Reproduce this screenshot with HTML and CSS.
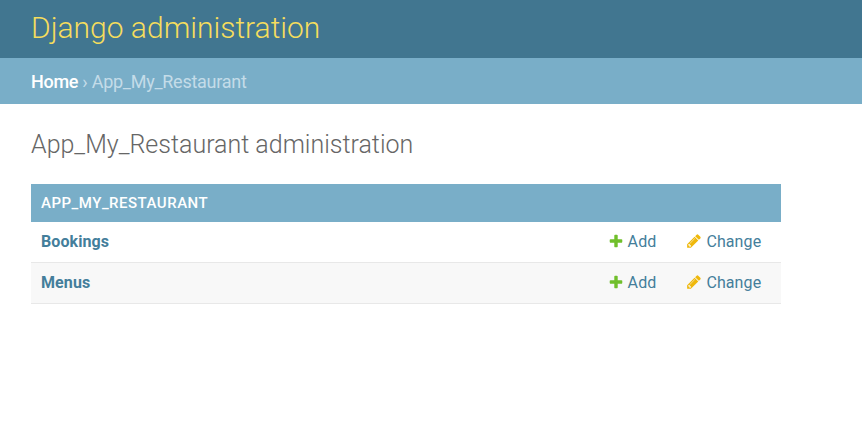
FILE: index.html
```html
<!DOCTYPE html>
<html lang="en">
<head>
<meta charset="utf-8">
<title>App_My_Restaurant administration</title>
<link rel="stylesheet" href="styles.css">
</head>
<body>
<header class="header"><h1 class="brand">Django administration</h1></header>
<nav class="breadcrumbs"><a class="home" href="#">Home</a> › App_My_Restaurant</nav>
<main class="content">
<h2 class="title">App_My_Restaurant administration</h2>
<section class="module">
<h3 class="caption">App_My_Restaurant</h3>
<div class="row">
<a class="model" href="#">Bookings</a>
<a class="add" href="#"><svg class="icon" viewBox="0 0 1792 1792"><path fill="#70bf2b" d="M1600 796v192q0 40-28 68t-68 28h-416v416q0 40-28 68t-68 28h-192q-40 0-68-28t-28-68v-416h-416q-40 0-68-28t-28-68v-192q0-40 28-68t68-28h416v-416q0-40 28-68t68-28h192q40 0 68 28t28 68v416h416q40 0 68 28t28 68z"/></svg>Add</a>
<a class="change" href="#"><svg class="icon" viewBox="0 0 1792 1792"><path fill="#efb80b" d="M491 1536l91-91-235-235-91 91v107h128v128h107zm523-928q0-22-22-22-10 0-17 7l-542 542q-7 7-7 17 0 22 22 22 10 0 17-7l542-542q7-7 7-17zm-54-192l416 416-832 832h-416v-416zm683 96q0 53-37 90l-166 166-416-416 166-165q36-38 90-38 53 0 91 38l235 234q37 39 37 91z"/></svg>Change</a>
</div>
<div class="row alt">
<a class="model" href="#">Menus</a>
<a class="add" href="#"><svg class="icon" viewBox="0 0 1792 1792"><path fill="#70bf2b" d="M1600 796v192q0 40-28 68t-68 28h-416v416q0 40-28 68t-68 28h-192q-40 0-68-28t-28-68v-416h-416q-40 0-68-28t-28-68v-192q0-40 28-68t68-28h416v-416q0-40 28-68t68-28h192q40 0 68 28t28 68v416h416q40 0 68 28t28 68z"/></svg>Add</a>
<a class="change" href="#"><svg class="icon" viewBox="0 0 1792 1792"><path fill="#efb80b" d="M491 1536l91-91-235-235-91 91v107h128v128h107zm523-928q0-22-22-22-10 0-17 7l-542 542q-7 7-7 17 0 22 22 22 10 0 17-7l542-542q7-7 7-17zm-54-192l416 416-832 832h-416v-416zm683 96q0 53-37 90l-166 166-416-416 166-165q36-38 90-38 53 0 91 38l235 234q37 39 37 91z"/></svg>Change</a>
</div>
</section>
</main>
</body>
</html>
```
FILE: styles.css
```css
* { box-sizing: border-box; }
body { margin: 0; background: #fff; font-family: Roboto, sans-serif; color: #333; }
a { color: #447e9b; text-decoration: none; }
.header { height: 58px; padding: 0 31px; background: #417690; }
.brand { margin: 0; font-size: 30px; line-height: 56px; font-weight: 300; color: #f5dd5d; }
.breadcrumbs { height: 46px; padding: 0 31px; background: #79aec8; color: #c4dce8; font-size: 18px; line-height: 48px; letter-spacing: -0.26px; }
.breadcrumbs .home { color: #fff; font-weight: 500; letter-spacing: -0.3px; }
.content { padding: 25px 31px; }
.title { margin: 0 0 23px; font-size: 25px; line-height: 32px; font-weight: 300; color: #666; }
.module { width: 750px; }
.caption { margin: 0; height: 38px; padding: 0 10px; background: #79aec8; color: #fff; font-size: 15px; line-height: 38px; font-weight: 500; letter-spacing: 0.5px; text-transform: uppercase; }
.row { display: grid; grid-template-columns: 1fr 78px 85px; height: 41px; padding: 0 10px; border-bottom: 1px solid #e8e8e8; font-size: 16px; line-height: 40px; letter-spacing: 0.1px; }
.alt { background: #f8f8f8; }
.model { font-weight: 700; }
.add, .change { display: flex; align-items: center; }
.icon { width: 16px; height: 16px; margin: 0 4px 2px 0; }
.add .icon { margin-right: 3.6px; }
.change .icon { margin-right: 4.4px; }
```
